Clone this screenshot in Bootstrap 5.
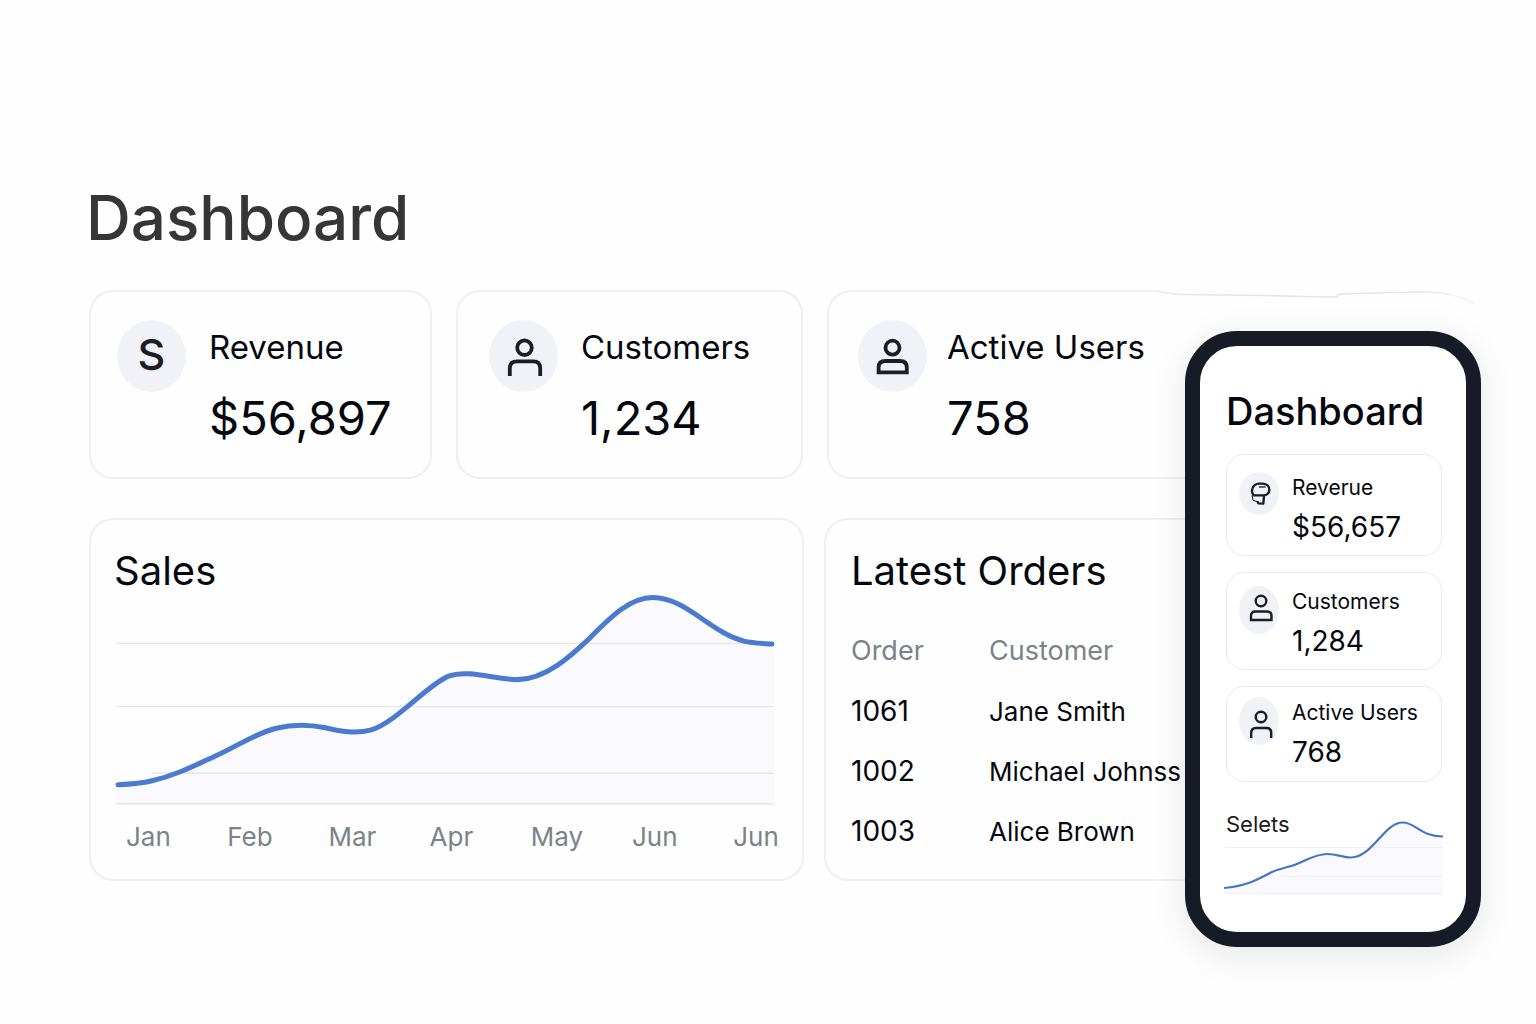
<!DOCTYPE html>
<html lang="en">
<head>
<meta charset="utf-8">
<meta name="viewport" content="width=device-width, initial-scale=1">
<title>Dashboard</title>
<link href="https://cdn.jsdelivr.net/npm/bootstrap@5.3.0/dist/css/bootstrap.min.css" rel="stylesheet">
<style>
  :root { --ink: #06080f; --line: #eeeff1; --page: #fefefe; --disc: #f1f2f8; --accent: #4a7bd0; --quiet: #7b8389; }
  body { font-family: Inter, "Liberation Sans", sans-serif; color: var(--ink); background: var(--page); }
  .board { padding: 179px 58px 60px 89px; }
  .board-title { font-size: 62px; line-height: 78px; font-weight: 500; color: #363636; margin: 0 0 33px -3px; }
  .stats-grid { display: grid; grid-template-columns: 343fr 347fr 651fr; gap: 24px; margin-bottom: 39px; }
  .panels-grid { display: grid; grid-template-columns: 715fr 654fr; gap: 20px; }
  .tile { border: 2px solid var(--line); border-radius: 24px; }
  .tile-open { border-right: 0; border-top-right-radius: 0; border-bottom-right-radius: 0; }

  .stat { padding: 28px 12px 15px 31px; gap: 23px; }
  .stat-first { padding-left: 26px; }
  .stat-wide { padding-left: 29px; gap: 20px; }
  .stat-disc { width: 69px; height: 72px; border-radius: 50%; background: var(--disc); color: #1b1e26; font-size: 43px; line-height: 68px; font-weight: 500; }
  .stat-name { font-size: 33px; line-height: 54px; }
  .stat-value { font-size: 47px; line-height: 88px; }
  .edge-wave { position: absolute; top: -6px; right: 0; width: 323px; height: 44px; }

  .panel { padding: 27px 23px 25px; }
  .panel-orders { padding: 27px 0 17px 25px; }
  .panel-title { font-size: 40px; line-height: 48px; font-weight: 400; margin: 0; }
  .months { font-size: 26px; line-height: 34px; color: var(--quiet); margin-top: 15px; padding-left: 12px; }
  .months span { flex: 0 0 15.5%; }
  .months span:last-child { flex-basis: auto; }
  .orders { margin-top: 26px; table-layout: fixed; width: 100%; }
  .orders th, .orders td { height: 60px; padding: 0; vertical-align: middle; white-space: nowrap; }
  .orders th { font-size: 27px; font-weight: 400; color: var(--quiet); }
  .orders td { font-size: 26px; }
  .orders .num { font-size: 28px; width: 138px; }
  .orders th.num { font-size: 27px; }

  .phone { position: absolute; top: 331px; right: 55px; width: 296px; padding: 42px 24px 36px 26px; border: 15px solid #171b25; border-radius: 52px; background: #fff; box-shadow: 0 8px 36px rgba(20, 24, 36, .1); }
  .phone-title { font-size: 38px; line-height: 46px; font-weight: 500; margin: 0 0 20px; }
  .mini { padding: 13px 4px 5px 12px; gap: 13px; border: 1px solid #e9eaed; border-radius: 18px; }
  .mini-first { padding-top: 17px; }
  .mini-last { padding-top: 10px; padding-bottom: 6px; }
  .mini-disc { width: 40px; height: 48px; border-radius: 50%; background: var(--disc); }
  .mini-first .mini-disc { height: 43px; }
  .mini-name { font-size: 21px; line-height: 32px; white-space: nowrap; }
  .mini-value { font-size: 28px; line-height: 46px; }
  .phone-chart-title { font-size: 22px; line-height: 32px; font-weight: 400; margin: 26px 0 -22px; color: #1a1c22; }
  svg { display: block; }
  .plot { width: 100%; height: auto; overflow: visible; }
</style>
<script src="https://cdn.jsdelivr.net/npm/bootstrap@5.3.0/dist/js/bootstrap.bundle.min.js"></script>
</head>
<body>
<div class="position-relative min-vh-100">
  <main class="board container-fluid">
    <h1 class="board-title">Dashboard</h1>

    <section class="stats-grid" aria-label="Key figures">
      <div class="tile stat stat-first d-flex align-items-start">
        <div class="stat-disc text-center flex-shrink-0">S</div>
        <div><div class="stat-name">Revenue</div><div class="stat-value">$56,897</div></div>
      </div>
      <div class="tile stat d-flex align-items-start">
        <div class="stat-disc flex-shrink-0">
          <svg width="69" height="72" viewBox="0 0 69 72" fill="none" stroke="currentColor" stroke-width="3.8" aria-hidden="true"><circle cx="35.5" cy="27.7" r="7.3"/><path d="M20.8 56V48.5Q20.8 41.4 28 41.4H44.5Q51.2 41.4 51.2 48.5V56"/></svg>
        </div>
        <div><div class="stat-name">Customers</div><div class="stat-value">1,234</div></div>
      </div>
      <div class="tile tile-open stat stat-wide d-flex align-items-start position-relative">
        <div class="stat-disc flex-shrink-0">
          <svg width="69" height="72" viewBox="0 0 69 72" fill="none" stroke="currentColor" stroke-width="3.8" aria-hidden="true"><circle cx="34.5" cy="27.7" r="7"/><path d="M20.6 52.4V47.5Q20.6 41 27.5 41H42Q48.8 41 48.8 47.5V52.4Z"/></svg>
        </div>
        <div><div class="stat-name">Active Users</div><div class="stat-value">758</div></div>
        <svg class="edge-wave" viewBox="1155 286 323 44" fill="none" aria-hidden="true">
          <defs><linearGradient id="fade" x1="0" x2="1"><stop offset="0" stop-color="#e9eaed"/><stop offset=".3" stop-color="#e6dff0"/><stop offset=".85" stop-color="#eae5f1"/><stop offset="1" stop-color="#f6f4f8"/></linearGradient></defs>
          <rect x="1155" y="286" width="324" height="44" fill="#fefefe"/>
          <path d="M1155 291C1164 291.500 1168 294 1178 294.3C1210 295 1250 295 1278 295.8C1300 296.4 1320 297 1336 297Q1338.5 296.5 1339 294C1370 293.5 1400 292 1427 292C1448 292 1462 297 1475 303.5" stroke="url(#fade)" stroke-width="1.6"/>
        </svg>
      </div>
    </section>

    <section class="panels-grid">
      <div class="tile panel">
        <h2 class="panel-title">Sales</h2>
        <svg class="plot" viewBox="114 594 664 210" fill="none" role="img" aria-label="Sales by month">
          <path d="M116 783.5C130 783 142 782 152 779.5C176 774 195 764 219 753C240 743 256 732 276 727C292 723 308 723 325 726.5C340 730 355 733 370 729C395 722 425 685 448 675C468 668 495 678.5 517 678.5C545 678 570 655 588 638C608 618 628 596.5 652 596.5C685 596.5 710 632 743 640C752 642 763 642.5 773 643V802H116Z" fill="#f9f9fe"/>
          <path d="M116 642.5H773M116 705.5H773M152 772H773M116 802.5H773" stroke="#e6e7eb" stroke-width="1.4"/>
          <path d="M118 783.5C130 783 142 782 152 779.5C176 774 195 764 219 753C240 743 256 732 276 727C292 723 308 723 325 726.5C340 730 355 733 370 729C395 722 425 685 448 675C468 668 495 678.5 517 678.5C545 678 570 655 588 638C608 618 628 596.5 652 596.5C685 596.5 710 632 743 640C752 642 763 642.5 771 643" stroke="#4a7bd0" stroke-width="5" stroke-linecap="round"/>
        </svg>
        <div class="months d-flex">
          <span>Jan</span><span>Feb</span><span>Mar</span><span>Apr</span><span>May</span><span>Jun</span><span>Jun</span>
        </div>
      </div>

      <div class="tile tile-open panel-orders">
        <h2 class="panel-title">Latest Orders</h2>
        <table class="orders">
          <thead><tr><th class="num" scope="col">Order</th><th scope="col">Customer</th></tr></thead>
          <tbody>
            <tr><td class="num">1061</td><td>Jane Smith</td></tr>
            <tr><td class="num">1002</td><td>Michael Johnss</td></tr>
            <tr><td class="num">1003</td><td>Alice Brown</td></tr>
          </tbody>
        </table>
      </div>
    </section>
  </main>

  <aside class="phone" aria-label="Mobile view">
    <h2 class="phone-title">Dashboard</h2>
    <div class="d-flex flex-column gap-3">
      <div class="mini mini-first d-flex align-items-start">
        <div class="mini-disc flex-shrink-0">
          <svg width="40" height="43" viewBox="0 0 120 129" fill="none" stroke="#1b1e26" stroke-width="7" stroke-linejoin="round" aria-hidden="true"><path d="M44 70C34 58 40 36 60 35H70C86 36 92 44 91 54C90 66 84 70 72 70H40"/><path d="M60 45H80" stroke-width="4"/><path d="M75 72L73 95L58 94L55 88" stroke-width="7"/><path d="M39 70L42 85L57 89" stroke-width="3"/></svg>
        </div>
        <div><div class="mini-name">Reverue</div><div class="mini-value">$56,657</div></div>
      </div>
      <div class="mini d-flex align-items-start">
        <div class="mini-disc flex-shrink-0">
          <svg width="40" height="48" viewBox="0 0 40 48" fill="none" stroke="#1b1e26" stroke-width="2.4" aria-hidden="true"><circle cx="22" cy="15" r="5.3"/><path d="M12 34V30Q12 25.5 16.5 25.5H28Q32.5 25.5 32.5 30V34Z"/></svg>
        </div>
        <div><div class="mini-name">Customers</div><div class="mini-value">1,284</div></div>
      </div>
      <div class="mini mini-last d-flex align-items-start">
        <div class="mini-disc flex-shrink-0">
          <svg width="40" height="48" viewBox="0 0 40 48" fill="none" stroke="#1b1e26" stroke-width="2.4" aria-hidden="true"><circle cx="22" cy="20" r="5.3"/><path d="M12.2 41V36Q12.2 31 17 31H27.5Q32.2 31 32.2 36V41"/></svg>
        </div>
        <div><div class="mini-name">Active Users</div><div class="mini-value">768</div></div>
      </div>
    </div>
    <h3 class="phone-chart-title">Selets</h3>
    <svg class="plot" viewBox="1226 818 216 78" fill="none" role="img" aria-label="Sales trend">
      <path d="M1224 888C1248 886 1258 879 1272 872C1281 868 1288 867.5 1297 864C1307 860 1316 854 1327 854C1338 854 1342 857.5 1351 857.5C1373 857 1384 822.5 1402.5 822.5C1416 822.5 1420 836.5 1443 836.5V893H1224Z" fill="#f9f9fe"/>
      <path d="M1225 847.5H1443M1285 876.5H1443M1225 893.5H1443" stroke="#eeeff3"/>
      <path d="M1224 888C1248 886 1258 879 1272 872C1281 868 1288 867.5 1297 864C1307 860 1316 854 1327 854C1338 854 1342 857.5 1351 857.5C1373 857 1384 822.5 1402.5 822.5C1416 822.5 1420 836.5 1443 836.5" stroke="#4576c6" stroke-width="2.2"/>
    </svg>
  </aside>
</div>
</body>
</html>
